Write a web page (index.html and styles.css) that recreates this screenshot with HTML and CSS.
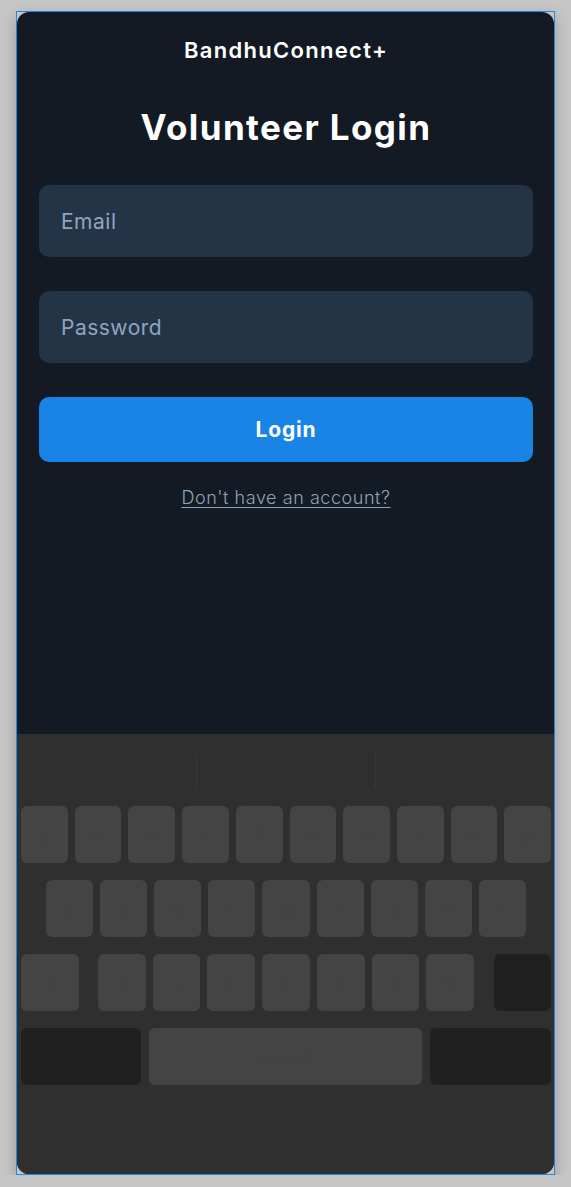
FILE: index.html
```html
<!DOCTYPE html>
<html lang="en">
<head>
<meta charset="utf-8">
<title>Volunteer Login</title>
<link rel="stylesheet" href="styles.css">
</head>
<body>
<div class="frame">
  <div class="phone">
    <main class="content">
      <div class="brand">BandhuConnect+</div>
      <h1 class="title">Volunteer Login</h1>
      <div class="field"><span class="placeholder">Email</span></div>
      <div class="field"><span class="placeholder">Password</span></div>
      <button class="login-btn" type="button">Login</button>
      <a class="signup-link" href="#">Don't have an account?</a>
    </main>
    <section class="keyboard">
      <div class="suggestions">
        <div class="sugg"></div>
        <div class="sugg divided"></div>
        <div class="sugg divided"></div>
      </div>
      <div class="kb-row row1">
        <div class="key">q</div><div class="key">w</div><div class="key">e</div><div class="key">r</div><div class="key">t</div><div class="key">y</div><div class="key">u</div><div class="key">i</div><div class="key">o</div><div class="key">p</div>
      </div>
      <div class="kb-row row2">
        <div class="key">a</div><div class="key">s</div><div class="key">d</div><div class="key">f</div><div class="key">g</div><div class="key">h</div><div class="key">j</div><div class="key">k</div><div class="key">l</div>
      </div>
      <div class="kb-row row3">
        <div class="key shift">⇧</div>
        <div class="key">z</div><div class="key">x</div><div class="key">c</div><div class="key">v</div><div class="key">b</div><div class="key">n</div><div class="key">m</div>
        <div class="key dark backspace">⌫</div>
      </div>
      <div class="kb-row row4">
        <div class="key dark mode">?123</div>
        <div class="key space">space</div>
        <div class="key dark enter">return</div>
      </div>
    </section>
  </div>
</div>
</body>
</html>
```
FILE: styles.css
```css
* { box-sizing: border-box; }

html, body {
  margin: 0;
  padding: 0;
  background: #c6c6c6;
}

body {
  font-family: "Inter", "Noto Sans", sans-serif;
  padding: 11px 0 0 16px;
}

.frame {
  width: 539px;
  height: 1164px;
  border: 1px solid #1e88e5;
  box-shadow: 0 6px 14px rgba(0, 0, 0, 0.22);
}

.phone {
  width: 537px;
  height: 1162px;
  border-radius: 12px;
  overflow: hidden;
  background: #131a23;
  display: flex;
  flex-direction: column;
}

.content {
  flex: 1;
  padding: 26px 21px 0 22px;
  display: flex;
  flex-direction: column;
  align-items: stretch;
}

.brand {
  color: #ffffff;
  font-size: 22px;
  line-height: 24px;
  font-weight: 600;
  text-align: center;
  letter-spacing: 1.3px;
}

.title {
  margin: 45px 0 0;
  color: #ffffff;
  font-size: 35px;
  line-height: 40px;
  font-weight: 700;
  text-align: center;
  letter-spacing: 1.4px;
}

.field {
  margin-top: 38px;
  height: 72px;
  border-radius: 10px;
  background: #243447;
  display: flex;
  align-items: center;
  padding-left: 22px;
}

.field + .field { margin-top: 34px; }

.placeholder {
  color: #8ea5bf;
  font-size: 21px;
  font-weight: 400;
  letter-spacing: 0.5px;
}

.login-btn {
  margin-top: 34px;
  height: 65px;
  border: none;
  border-radius: 10px;
  background: #1a84e6;
  color: #ffffff;
  font-family: inherit;
  font-size: 21px;
  font-weight: 700;
  letter-spacing: 0.8px;
}

.signup-link {
  margin-top: 25px;
  align-self: center;
  color: #8ea3bb;
  font-size: 18px;
  line-height: 22px;
  font-weight: 300;
  letter-spacing: 0.55px;
  text-decoration: underline;
  text-underline-offset: 3px;
}

.keyboard {
  height: 440px;
  flex: none;
  background: #2f2f2f;
  padding: 0 3px 0 4px;
  display: flex;
  flex-direction: column;
}

.suggestions {
  height: 72px;
  display: grid;
  grid-template-columns: 175px 179px 1fr;
  align-items: center;
}

.sugg {
  height: 35px;
}

.sugg.divided {
  border-left: 1px solid #383838;
}

.kb-row {
  display: flex;
  gap: 7px;
  height: 57px;
}

.kb-row + .kb-row { margin-top: 17px; }

.kb-row .key { flex: 1 1 0; }

.row2 { padding: 0 25px; }

.row3 .shift { flex: 0 0 58px; margin-right: 12px; }
.row3 .backspace { flex: 0 0 57px; margin-left: 13px; }

.row4 { gap: 8px; }
.row4 .mode { flex: 0 0 120px; }
.row4 .enter { flex: 0 0 121px; }

.key {
  background: #444444;
  border-radius: 6px;
  display: flex;
  align-items: center;
  justify-content: center;
  color: #434343;
  font-size: 20px;
  font-family: "Roboto", sans-serif;
}

.key.dark {
  background: #202020;
  color: #212121;
  font-size: 16px;
}
```
